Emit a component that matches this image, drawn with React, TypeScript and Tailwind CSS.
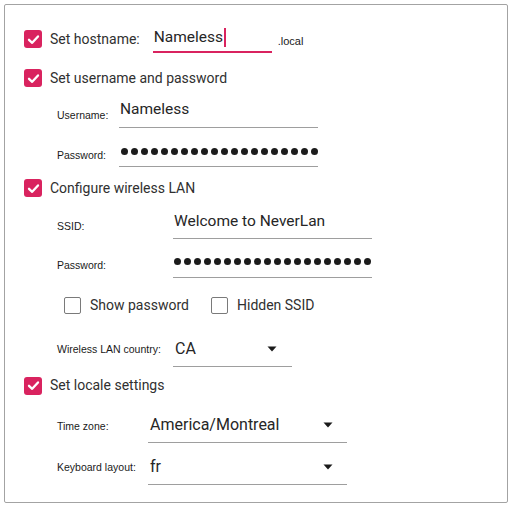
import React from "react";

const PINK = "#d9235f";

function CheckBox({ checked }: { checked: boolean }) {
  if (!checked) {
    return <span className="block h-[17px] w-[17px] shrink-0 rounded-[2px] border-[1.5px] border-[#7a7a7a] bg-white" />;
  }
  return (
    <span className="flex h-[18px] w-[18px] shrink-0 items-center justify-center rounded-[3px] bg-[#d9235f]">
      <svg width="13" height="13" viewBox="0 0 13 13">
        <path d="M2 6.8 L5.2 9.8 L11 3.4" fill="none" stroke="white" strokeWidth="2.3" strokeLinecap="round" strokeLinejoin="round" />
      </svg>
    </span>
  );
}

function Toggle({ label, h }: { label: string; h: string }) {
  return (
    <div className={`flex items-center gap-2 ${h}`}>
      <CheckBox checked />
      <span className="text-[14px] text-[#303030]">{label}</span>
    </div>
  );
}

function Dots() {
  return (
    <div className="flex gap-[3px]">
      {Array.from({ length: 20 }).map((_, i) => (
        <span key={i} className="block h-[7px] w-[7px] rounded-full bg-[#1c1c1c]" />
      ))}
    </div>
  );
}

function Arrow() {
  return (
    <svg width="10" height="6" viewBox="0 0 10 6" className="shrink-0">
      <path d="M0.5 0.5 L9.5 0.5 L5 5.5 Z" fill="#1a1a1a" />
    </svg>
  );
}

const small = "text-[10.5px] leading-[14px] text-[#1a1a1a] font-['Liberation_Sans',sans-serif]";

export default function App() {
  return (
    <div className="font-['Roboto',sans-serif]">
      <div className="m-[4px] h-[499px] w-[504px] rounded-[2px] border border-[#a3a3a3] bg-white pl-[19px] pt-[19px]">
        {/* hostname */}
        <div className="flex h-[30px]">
          <div className="flex items-center gap-2">
            <CheckBox checked />
            <span className="text-[14px] text-[#303030]">Set hostname:</span>
          </div>
          <div className="ml-[13px] flex h-[29px] w-[119px] items-center border-b-2 border-[#d9235f] pb-[1px] pl-[1px]">
            <span className="text-[15.5px] leading-[18px] text-[#262626]">Nameless</span>
            <span className="ml-[1px] block h-[19px] w-[2px]" style={{ background: PINK }} />
          </div>
          <span className="ml-[6px] self-center pt-[5px] text-[11px] text-[#1a1a1a] font-['Liberation_Sans',sans-serif]">.local</span>
        </div>

        <Toggle label="Set username and password" h="h-[48px]" />

        <div className="pl-[33px]">
          <div className="flex h-[26px]">
            <span className={`${small} mb-[6px] w-[62px] self-end`}>Username:</span>
            <div className="h-[26px] w-[199px] border-b border-[#9e9e9e] pl-[1px]">
              <span className="block text-[15.5px] leading-[14px] text-[#262626]">Nameless</span>
            </div>
          </div>
          <div className="flex h-[39px]">
            <span className={`${small} mb-[5px] w-[62px] self-end`}>Password:</span>
            <div className="flex h-[39px] w-[199px] items-end border-b border-[#9e9e9e] pb-[11px] pl-[2px]">
              <Dots />
            </div>
          </div>
        </div>

        <Toggle label="Configure wireless LAN" h="h-[42px]" />

        <div className="pl-[33px]">
          <div className="flex h-[30px]">
            <span className={`${small} mb-[6px] w-[116px] self-end`}>SSID:</span>
            <div className="flex h-[30px] w-[199px] items-end border-b border-[#9e9e9e] pb-[8px] pl-[1px]">
              <span className="text-[15.5px] leading-[18px] text-[#262626]">Welcome to NeverLan</span>
            </div>
          </div>
          <div className="flex h-[39px]">
            <span className={`${small} mb-[6px] w-[116px] self-end`}>Password:</span>
            <div className="flex h-[39px] w-[199px] items-end border-b border-[#9e9e9e] pb-[12px] pl-[1px]">
              <Dots />
            </div>
          </div>

          <div className="flex h-[54px] items-center pl-[7px]">
            <CheckBox checked={false} />
            <span className="ml-[9px] w-[121px] text-[14px] text-[#303030]">Show password</span>
            <CheckBox checked={false} />
            <span className="ml-[9px] text-[14px] text-[#303030]">Hidden SSID</span>
          </div>

          <div className="flex h-[35px]">
            <span className={`${small} mb-[11px] w-[116px] self-end`}>Wireless LAN country:</span>
            <div className="flex h-[35px] w-[119px] items-end border-b border-[#9e9e9e] pb-[7px] pl-[2px]">
              <span className="flex-1 text-[16px] leading-[20px] text-[#262626]">CA</span>
              <span className="mb-[7px] mr-[15px]">
                <Arrow />
              </span>
            </div>
          </div>
        </div>

        <Toggle label="Set locale settings" h="h-[37px]" />

        <div className="pl-[33px]">
          <div className="flex h-[39px]">
            <span className={`${small} mb-[10px] w-[91px] self-end`}>Time zone:</span>
            <div className="flex h-[39px] w-[199px] items-end border-b border-[#9e9e9e] pb-[7px] pl-[2px]">
              <span className="flex-1 text-[16px] leading-[20px] text-[#262626]">America/Montreal</span>
              <span className="mb-[7px] mr-[14px]">
                <Arrow />
              </span>
            </div>
          </div>
          <div className="flex h-[42px]">
            <span className={`${small} mb-[11px] w-[91px] self-end`}>Keyboard layout:</span>
            <div className="flex h-[42px] w-[199px] items-end border-b border-[#9e9e9e] pb-[7px] pl-[2px]">
              <span className="flex-1 text-[16px] leading-[20px] text-[#262626]">fr</span>
              <span className="mb-[7px] mr-[14px]">
                <Arrow />
              </span>
            </div>
          </div>
        </div>
      </div>
    </div>
  );
}
